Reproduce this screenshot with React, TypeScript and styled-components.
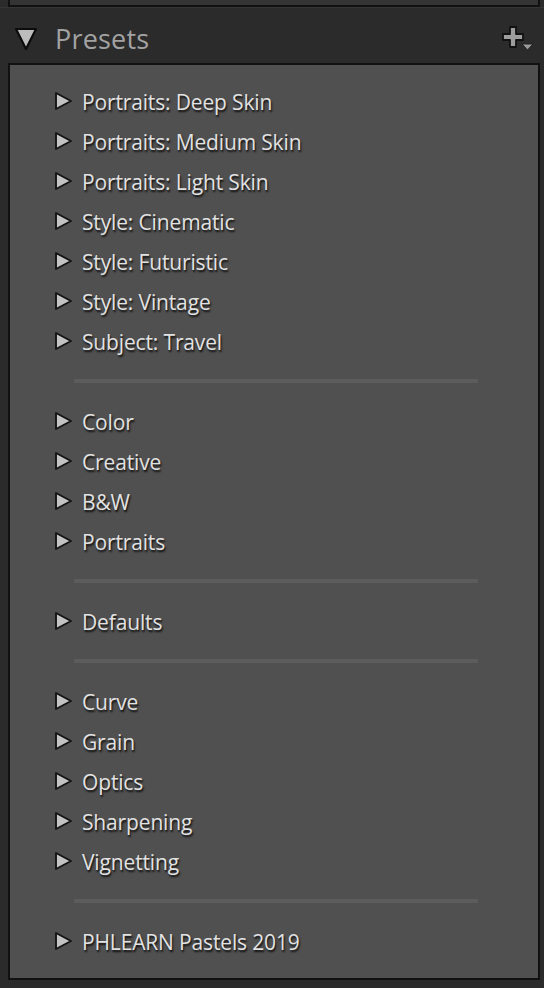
import styled, { createGlobalStyle } from "styled-components";

const GlobalStyle = createGlobalStyle`
  html, body {
    margin: 0;
    padding: 0;
    background: #2b2b2b;
  }
  body {
    font-family: "Open Sans", "Noto Sans", sans-serif;
  }
`;

type Item = { kind: "preset"; label: string } | { kind: "divider" };

const GROUPS: string[][] = [
  [
    "Portraits: Deep Skin",
    "Portraits: Medium Skin",
    "Portraits: Light Skin",
    "Style: Cinematic",
    "Style: Futuristic",
    "Style: Vintage",
    "Subject: Travel",
  ],
  ["Color", "Creative", "B&W", "Portraits"],
  ["Defaults"],
  ["Curve", "Grain", "Optics", "Sharpening", "Vignetting"],
  ["PHLEARN Pastels 2019"],
];

const items: Item[] = GROUPS.flatMap((group, i) => {
  const rows: Item[] = group.map((label) => ({ kind: "preset", label }));
  return i === 0 ? rows : [{ kind: "divider" } as Item, ...rows];
});

const App = () => {
  return (
    <>
      <GlobalStyle />
      <Page>
        <PrevPanel />
        <Header>
          <HeaderLeft>
            <svg width="24" height="26" viewBox="0 0 24 26">
              <path
                d="M2 3 L22 3 L12 23 Z"
                fill="#bdbdbd"
                stroke="#0c0c0c"
                strokeWidth="2.2"
                strokeLinejoin="round"
              />
            </svg>
            <Title>Presets</Title>
          </HeaderLeft>
          <AddButton>
            <svg width="34" height="30" viewBox="0 0 34 30">
              <path
                d="M8 2 H14 V9 H21 V15 H14 V22 H8 V15 H1 V9 H8 Z"
                fill="#9d9d9d"
                stroke="#111"
                strokeWidth="1.8"
                strokeLinejoin="round"
              />
              <path d="M20 19 H31 L25.5 25 Z" fill="#9a9a9a" stroke="#222" strokeWidth="1" />
            </svg>
          </AddButton>
        </Header>
        <Panel>
          {items.map((item, index) =>
            item.kind === "divider" ? (
              <DividerRow key={index}>
                <Divider />
              </DividerRow>
            ) : (
              <PresetRow key={index}>
                <svg width="19" height="20" viewBox="0 0 19 20">
                  <path
                    d="M2 2 L17 10 L2 18 Z"
                    fill="#c4c4c4"
                    stroke="#151515"
                    strokeWidth="1.9"
                    strokeLinejoin="round"
                  />
                </svg>
                <PresetLabel>{item.label}</PresetLabel>
              </PresetRow>
            )
          )}
        </Panel>
        <Footer />
      </Page>
    </>
  );
};

export default App;

const Page = styled.div`
  width: 544px;
  height: 988px;
  display: flex;
  flex-direction: column;
  background: #2b2b2b;
  overflow: hidden;
`;

const PrevPanel = styled.div`
  height: 5px;
  margin: 0 4px 0 8px;
  background: #343434;
  border: 2px solid #111;
  border-top: none;
  flex-shrink: 0;
`;

const Header = styled.div`
  height: 56px;
  flex-shrink: 0;
  display: flex;
  align-items: center;
  justify-content: space-between;
  padding: 6px 8px 0 14px;
  border-top: 1px solid #353535;
  box-sizing: border-box;
`;

const HeaderLeft = styled.div`
  display: flex;
  align-items: center;
  gap: 17px;
`;

const Title = styled.span`
  font-size: 27px;
  color: #a2a2a2;
  letter-spacing: 0.2px;
  line-height: 1;
  margin-top: -1px;
`;

const AddButton = styled.div`
  display: flex;
  align-items: center;
  margin-top: 2px;
`;

const Panel = styled.div`
  margin: 0 4px 0 8px;
  height: 917px;
  box-sizing: border-box;
  flex-shrink: 0;
  background: #505050;
  border: 2px solid #111;
  padding: 16px 0 16px 44px;
  display: flex;
  flex-direction: column;
`;

const PresetRow = styled.div`
  height: 40px;
  display: flex;
  align-items: center;
  gap: 9px;
`;

const PresetLabel = styled.span`
  font-size: 21px;
  color: #e2e2e2;
  text-shadow: 1px 2px 2px rgba(0, 0, 0, 0.85);
  letter-spacing: -0.15px;
  margin-top: 1px;
`;

const DividerRow = styled.div`
  height: 40px;
  display: flex;
  align-items: center;
  padding-left: 20px;
  padding-right: 60px;
`;

const Divider = styled.div`
  flex: 1;
  height: 4px;
  background: #5c5c5c;
`;

const Footer = styled.div`
  flex: 1;
`;
